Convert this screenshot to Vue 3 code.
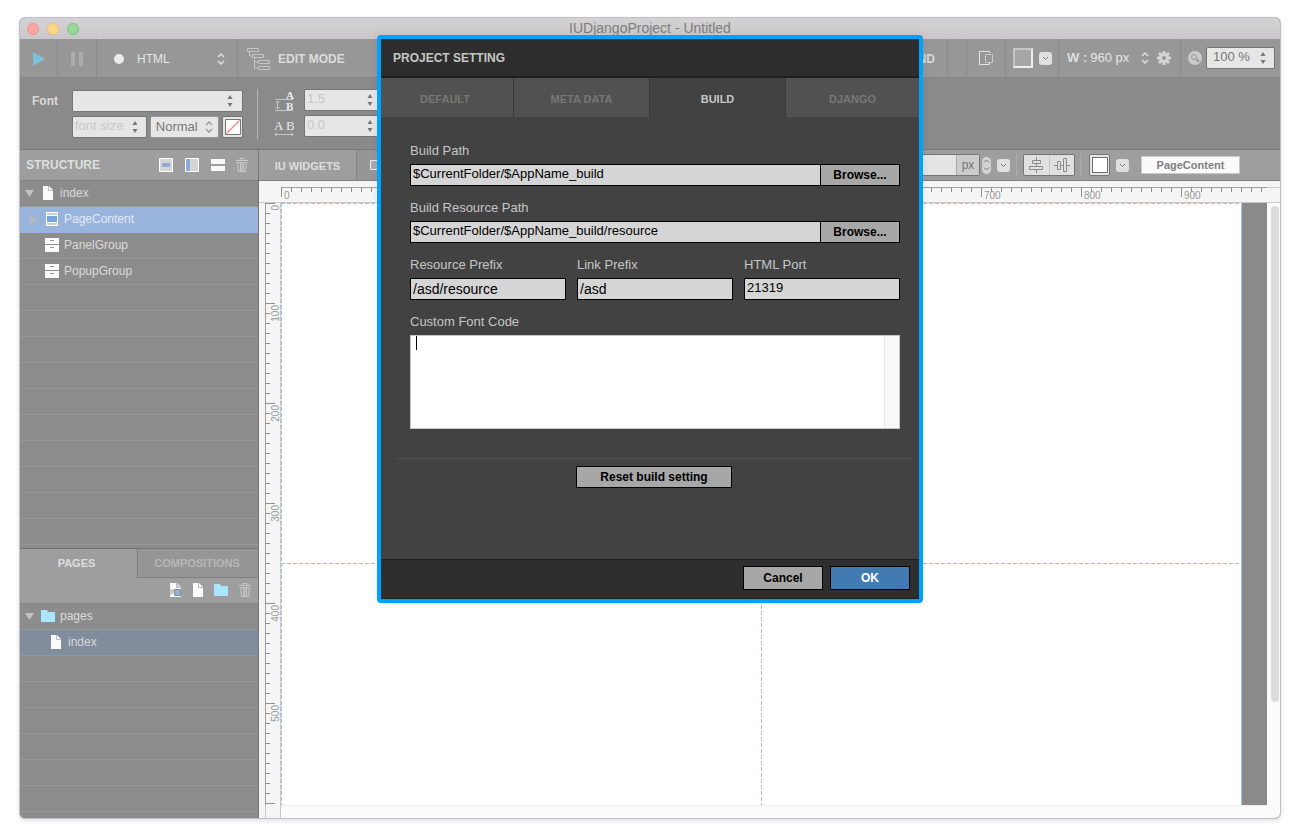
<script setup>
import { ref } from 'vue'

const mode = ref('HTML')
const weight = ref('Normal')
const fontFamily = ref('')
const fontSize = ref('')
const lineHeight = ref('')
const letterSpacing = ref('')
const zoomLevel = ref('100 %')
const size = ref('')
const buildPath = ref('$CurrentFolder/$AppName_build')
const resourcePath = ref('$CurrentFolder/$AppName_build/resource')
const resourcePrefix = ref('/asd/resource')
const linkPrefix = ref('/asd')
const port = ref('21319')
const fontCode = ref('')
const tab = ref('BUILD')
const tabs = ['DEFAULT', 'META DATA', 'BUILD', 'DJANGO']

const ticksX = Array.from({ length: 99 }, (_, i) => i * 10)
const ticksY = Array.from({ length: 61 }, (_, i) => i * 10)
const labelsX = ticksX.filter((t) => t % 100 === 0)
const labelsY = ticksY.filter((t) => t % 100 === 0 && t < 600)
const teeth = [0, 45, 90, 135, 180, 225, 270, 315]
</script>

<template>
  <div class="page">
    <div class="window">
      <header class="titlebar">
        <div class="lights">
          <button class="light red" aria-label="Close"></button>
          <button class="light yellow" aria-label="Minimize"></button>
          <button class="light green" aria-label="Zoom"></button>
        </div>
        <h1>IUDjangoProject - Untitled</h1>
      </header>

      <div class="toolbar">
        <button class="cell play" aria-label="Run">
          <svg width="12" height="14"><path d="M0 0L12 7L0 14Z" fill="#7cc0dc" /></svg>
        </button>
        <button class="cell pause" aria-label="Pause">
          <svg width="12" height="14"><path d="M0 0h4v14h-4zM8 0h4v14h-4z" fill="#acacac" /></svg>
        </button>
        <label class="cell mode">
          <span class="dot"></span>
          <select v-model="mode" aria-label="Output mode"><option>HTML</option></select>
          <svg width="8" height="12" class="chev"><path d="M1 4L4 1L7 4M1 8L4 11L7 8" /></svg>
        </label>
        <button class="cell edit">
          <svg width="24" height="24" fill="none" stroke="#c6c6c6">
            <path d="M.5 1.5h11v3h-11zM5.5 7.5h11v3h-11zM11.5 13.5h11v3h-11zM11.5 19.5h11v3h-11z" />
            <path d="M2.5 5v4h3M7.5 11v10h4M7.5 15h4" />
          </svg>
          EDIT MODE
        </button>
        <span class="grow"></span>
        <button class="cell mode-end">ND</button>
        <span class="cell blank"></span>
        <button class="cell bounds" aria-label="Show bounds">
          <svg width="15" height="15" fill="none" stroke="#e2e2e2">
            <path d="M10.5 2V.5H.5v13h10V12" />
            <path d="M6.5 3.5h7v8h-7z" stroke-dasharray="2 1" />
          </svg>
        </button>
        <div class="cell fill">
          <button class="color-box" aria-label="Background colour"></button>
          <button class="drop" aria-label="Background options">
            <svg width="7" height="5"><path d="M1 1L3.5 3.5L6 1" /></svg>
          </button>
        </div>
        <div class="cell width">
          <b>W :</b><span>960 px</span>
          <button class="bare" aria-label="Change width">
            <svg width="8" height="12" class="chev"><path d="M1 4L4 1L7 4M1 8L4 11L7 8" /></svg>
          </button>
          <button class="bare" aria-label="Canvas settings">
            <svg width="14" height="14" viewBox="-7 -7 14 14">
              <g fill="#d4d4d4">
                <rect v-for="a in teeth" :key="a" x="-1.5" y="-7" width="3" height="4" :transform="`rotate(${a})`" />
              </g>
              <circle r="3.5" fill="none" stroke="#d4d4d4" stroke-width="3" />
            </svg>
          </button>
        </div>
        <div class="cell zoom">
          <svg width="14" height="14">
            <circle cx="7" cy="7" r="7" fill="#cbcbcb" />
            <circle cx="6" cy="6" r="2.5" fill="none" stroke="#999" />
            <path d="M8 8L11 11" stroke="#999" stroke-width="2" />
          </svg>
          <label class="combo zoom-input">
            <input v-model="zoomLevel" aria-label="Zoom level" />
            <svg width="6" height="12" class="tri"><path d="M3 0L5.5 4H.5ZM.5 8H5.5L3 12Z" /></svg>
          </label>
        </div>
      </div>

      <div class="fontbar">
        <label class="font-title" for="font-family">Font</label>
        <div class="font-fields">
          <div class="combo">
            <input id="font-family" v-model="fontFamily" />
            <svg width="6" height="12" class="tri"><path d="M3 0L5.5 4H.5ZM.5 8H5.5L3 12Z" /></svg>
          </div>
          <div class="font-row">
            <div class="combo size">
              <input v-model="fontSize" placeholder="font size" aria-label="Font size" />
              <svg width="6" height="12" class="tri"><path d="M3 0L5.5 4H.5ZM.5 8H5.5L3 12Z" /></svg>
            </div>
            <div class="combo weight">
              <select v-model="weight" aria-label="Font weight"><option>Normal</option></select>
              <svg width="8" height="12" class="chev dark"><path d="M1 4L4 1L7 4M1 8L4 11L7 8" /></svg>
            </div>
            <button class="swatch" aria-label="Font colour">
              <svg width="16" height="16">
                <path d="M.5 .5h15v15h-15z" fill="#fff" stroke="#777" />
                <path d="M1.5 14.5L14.5 1.5" stroke="#ff8a80" stroke-width="1.5" />
              </svg>
            </button>
          </div>
        </div>
        <span class="rule"></span>
        <div class="spacing">
          <label class="space-row">
            <svg width="20" height="20">
              <g fill="none" stroke="#c6c6c6">
                <path d="M1 8.5h18M1 19.5h18M3.5 10v8M1.500 12L3.5 10L5.5 12M1.5 16L3.5 18L5.5 16" />
              </g>
              <text x="12" y="8" class="serif small">A</text>
              <text x="12" y="19" class="serif small">B</text>
            </svg>
            <span class="combo">
              <input v-model="lineHeight" placeholder="1.5" aria-label="Line height" />
              <svg width="6" height="12" class="tri"><path d="M3 0L5.5 4H.5ZM.5 8H5.5L3 12Z" /></svg>
            </span>
          </label>
          <label class="space-row">
            <svg width="20" height="20">
              <text x="0" y="13" class="serif plain">A</text>
              <text x="12" y="13" class="serif plain">B</text>
              <path d="M1 17.5h18M3 15.5L1 17.5L3 19.5M17 15.5L19 17.5L17 19.5" fill="none" stroke="#c6c6c6" />
            </svg>
            <span class="combo">
              <input v-model="letterSpacing" placeholder="0.0" aria-label="Letter spacing" />
              <svg width="6" height="12" class="tri"><path d="M3 0L5.5 4H.5ZM.5 8H5.5L3 12Z" /></svg>
            </span>
          </label>
        </div>
      </div>

      <div class="workspace">
        <aside class="sidebar">
          <div class="panel-head">
            <h2>STRUCTURE</h2>
            <button class="bare" aria-label="Center layout">
              <svg width="14" height="14"><path d="M.5 .5h13v13h-13z" fill="#d5d5d5" stroke="#fff" /><path d="M3 5h8v4H3z" fill="#8facd8" /></svg>
            </button>
            <button class="bare" aria-label="Left layout">
              <svg width="14" height="14"><path d="M.5 .5h13v13h-13z" fill="#d5d5d5" stroke="#fff" /><path d="M1 1h4v12H1z" fill="#8facd8" /></svg>
            </button>
            <button class="bare" aria-label="Stacked layout">
              <svg width="14" height="14"><path d="M0 1h14v5H0zM0 8h14v5H0z" fill="#fafafa" /></svg>
            </button>
            <button class="bare trash" aria-label="Delete item">
              <svg width="12" height="14" fill="none" stroke="#c8c8c8">
                <path d="M0 2.5h12M4 2V.5h4V2M1.5 4.500h9L9.500 13.5h-7zM4.5 5v8M6 5v8M7.5 5v8" />
              </svg>
            </button>
          </div>
          <ul class="tree structure">
            <li class="top">
              <svg width="9" height="7"><path d="M0 0h9L4.5 7z" fill="#c3c3c3" /></svg>
              <svg width="10" height="14" class="doc"><path d="M0 0h6l4 4v10H0z" fill="#fafafa" /><path d="M5.5 0v4.5H10" fill="none" stroke="#bbb" /></svg>
              index
            </li>
            <li class="nested selected">
              <svg width="7" height="9" class="arrow"><path d="M0 0L7 4.5L0 9z" fill="#b9b9b9" /></svg>
              <svg width="12" height="14"><path d="M0 0h12v14H0z" fill="#fff" /><path d="M1 1h10v2H1zM1 11h10v2H1z" fill="#cfcfcf" /><path d="M1 4h10v6H1z" fill="#75a7e0" /></svg>
              PageContent
            </li>
            <li v-for="group in ['PanelGroup', 'PopupGroup']" :key="group" class="nested">
              <svg width="14" height="14" class="drawer"><path d="M0 0h14v6H0zM0 7h14v7H0z" fill="#fafafa" /><path d="M5 2.5h4M5 9.5h4" stroke="#999" /></svg>
              {{ group }}
            </li>
          </ul>
          <div class="lower-head">
            <div class="page-tabs">
              <button class="on">PAGES</button>
              <button>COMPOSITIONS</button>
            </div>
            <div class="page-tools">
              <button class="bare" aria-label="Add page from layout">
                <svg width="12" height="14"><path d="M0 0h7l4 4v10H0z" fill="#fafafa" /><path d="M6.500 0v4.500H11M0 7h5l-3 4H0" fill="#ccc" stroke="#bbb" /><path d="M4.500 6.500h6v6h-6z" fill="#8fb4e4" stroke="#888" /></svg>
              </button>
              <button class="bare" aria-label="Add page">
                <svg width="10" height="14"><path d="M0 0h6l4 4v10H0z" fill="#fafafa" /><path d="M5.5 0v4.5H10" fill="none" stroke="#bbb" /></svg>
              </button>
              <button class="bare" aria-label="Add folder">
                <svg width="14" height="12"><path d="M0 0h6l1 2h7v10H0z" fill="#a9e5fd" /></svg>
              </button>
              <button class="bare" aria-label="Delete page">
                <svg width="12" height="14" fill="none" stroke="#c8c8c8">
                  <path d="M0 2.5h12M4 2V.5h4V2M1.5 4.5h9L9.5 13.5h-7zM4.5 5v8M6 5v8M7.5 5v8" />
                </svg>
              </button>
            </div>
          </div>
          <ul class="tree pages">
            <li class="top">
              <svg width="9" height="7"><path d="M0 0h9L4.5 7z" fill="#c3c3c3" /></svg>
              <svg width="14" height="12" class="folder"><path d="M0 0h6l1 2h7v10H0z" fill="#a9e5fd" /></svg>
              pages
            </li>
            <li class="page-item">
              <svg width="10" height="14"><path d="M0 0h6l4 4v10H0z" fill="#fafafa" /><path d="M5.5 0v4.5H10" fill="none" stroke="#bbb" /></svg>
              index
            </li>
          </ul>
        </aside>

        <main class="editor">
          <div class="propbar">
            <button class="widgets">IU WIDGETS</button>
            <button class="widget-icon" aria-label="Box widget">
              <svg width="14" height="10"><path d="M.5 .5h13v9H.5z" fill="#aaa" stroke="#eee" /></svg>
            </button>
            <span class="grow"></span>
            <label class="unit-field"><input v-model="size" aria-label="Size" /><span>px</span></label>
            <button class="step" aria-label="Adjust size">
              <svg width="7" height="12" class="mini"><path d="M1 3.5L3.5 1L6 3.5M1 8.5L3.5 11L6 8.5" /></svg>
            </button>
            <button class="drop" aria-label="Size options">
              <svg width="7" height="5"><path d="M1 1L3.5 3.5L6 1" /></svg>
            </button>
            <span class="sep"></span>
            <div class="aligns">
              <button aria-label="Align centre">
                <svg width="14" height="16"><path d="M7.5 0v3M7.5 6v3M7.5 13v3M3.5 3.5h8v3h-8zM.5 9.5h13v3H.5z" /></svg>
              </button>
              <button aria-label="Align middle">
                <svg width="16" height="14"><path d="M0 7.5h3M6 7.5h4M13 7.5h3M3.5 3.5h3v8h-3zM9.5 .5h3v13h-3z" /></svg>
              </button>
            </div>
            <span class="sep"></span>
            <button class="swatch fill-swatch" aria-label="Fill colour"><i></i></button>
            <button class="drop" aria-label="Fill options">
              <svg width="7" height="5"><path d="M1 1L3.5 3.5L6 1" /></svg>
            </button>
            <button class="target">PageContent</button>
          </div>

          <div class="ruler-x">
            <svg width="100%" height="21">
              <path d="M22 6.5H2000" stroke="#cacaca" />
              <path d="M22 6.5H1008" stroke="#a0a0a0" />
              <path v-for="t in ticksX" :key="t" :d="`M${t + 22.5} 6V${t % 100 ? 11 : 16}`" stroke="#8f8f8f" />
              <text v-for="t in labelsX" :key="t" :x="t + 25" y="18">{{ t }}</text>
            </svg>
          </div>
          <div class="stage">
            <div class="ruler-y">
              <svg width="21" height="100%">
                <path d="M6.5 0V2000" stroke="#cacaca" />
                <path d="M6.5 0V602" stroke="#a0a0a0" />
                <path v-for="t in ticksY" :key="t" :d="`M6 ${t + 0.5}H${t % 100 ? 11 : 16}`" stroke="#8f8f8f" />
                <text
                  v-for="t in labelsY" :key="t" text-anchor="end"
                  :transform="`translate(20 ${t + 2}) rotate(-90)`"
                >{{ t }}</text>
              </svg>
            </div>
            <div class="scroll-area">
              <div class="view">
                <div class="canvas">
                  <span class="guide-h"></span>
                  <span class="guide-v"></span>
                </div>
                <div class="outside"></div>
              </div>
            </div>
            <div class="scrollbar"><span></span></div>
          </div>
        </main>
      </div>
    </div>

    <section class="dialog" role="dialog" aria-labelledby="dialog-title">
      <h2 id="dialog-title">PROJECT SETTING</h2>
      <div class="tabs" role="tablist">
        <button
          v-for="t in tabs" :key="t" role="tab" :class="{ active: t === tab }"
          :aria-selected="t === tab" @click="tab = t"
        >{{ t }}</button>
      </div>
      <form class="settings" @submit.prevent>
        <div class="field">
          <label for="build-path">Build Path</label>
          <div class="path"><input id="build-path" v-model="buildPath" /><button type="button">Browse...</button></div>
        </div>
        <div class="field">
          <label for="resource-path">Build Resource Path</label>
          <div class="path"><input id="resource-path" v-model="resourcePath" /><button type="button">Browse...</button></div>
        </div>
        <div class="three">
          <div class="field large">
            <label for="resource-prefix">Resource Prefix</label>
            <input id="resource-prefix" v-model="resourcePrefix" />
          </div>
          <div class="field large">
            <label for="link-prefix">Link Prefix</label>
            <input id="link-prefix" v-model="linkPrefix" />
          </div>
          <div class="field">
            <label for="port">HTML Port</label>
            <input id="port" v-model="port" />
          </div>
        </div>
        <div class="field">
          <label for="font-code">Custom Font Code</label>
          <div class="code">
            <textarea id="font-code" v-model="fontCode"></textarea>
            <span class="track"></span>
            <span class="caret"></span>
          </div>
        </div>
      </form>
      <div class="reset"><button>Reset build setting</button></div>
      <footer>
        <button>Cancel</button>
        <button class="ok">OK</button>
      </footer>
    </section>
  </div>
</template>

<style>
body {
  background: #fff;
}
</style>

<style scoped>
* {
  box-sizing: border-box;
}
.page {
  position: relative;
  display: flex;
  min-height: 100vh;
  padding: 17px 19px 21px;
  font: 12px/16px "Liberation Sans", Arial, sans-serif;
}
h1, h2, ul {
  margin: 0;
  padding: 0;
}
button, input, select, textarea {
  margin: 0;
  padding: 0;
  border: 0;
  border-radius: 0;
  font: inherit;
  color: inherit;
  outline: none;
}
button {
  background: none;
}
select {
  appearance: none;
  background: none;
}
svg {
  display: block;
  flex: none;
}
.window {
  flex: 1;
  min-width: 0;
  display: flex;
  flex-direction: column;
  overflow: hidden;
  border: 1px solid #c0c0c6;
  border-radius: 6px;
  background: #8c8c8c;
  box-shadow: 0 2px 5px rgba(0, 0, 0, 0.12);
}
.titlebar {
  position: relative;
  display: flex;
  align-items: center;
  justify-content: center;
  height: 21px;
  background: linear-gradient(#d4d2d4, #c9c7c9);
}
.titlebar h1 {
  padding-bottom: 1px;
  font-size: 14px;
  line-height: 16px;
  font-weight: 400;
  color: #7e7c7e;
}
.lights {
  position: absolute;
  left: 7px;
  display: flex;
  gap: 8px;
}
.light {
  width: 12px;
  height: 12px;
  border: 1px solid;
  border-radius: 50%;
}
.red { background: #f9a5a1; border-color: #e8928f; }
.yellow { background: #fdd789; border-color: #ecbb72; }
.green { background: #97d897; border-color: #78c084; }

.toolbar {
  display: flex;
  height: 39px;
  background: #979797;
  border-bottom: 1px solid #868686;
  color: #e6e6e6;
}
.cell {
  display: flex;
  align-items: center;
  padding-top: 2px;
  border-right: 1px solid #8a8a8a;
}
.grow {
  flex: 1;
}
.play { width: 38px; padding-left: 13px; }
.pause { width: 39px; padding-left: 13px; }
.mode { width: 141px; padding: 2px 12px 0 17px; }
.mode select { flex: 1; margin-left: 13px; }
.dot {
  width: 10px;
  height: 10px;
  border-radius: 50%;
  background: #ececec;
}
.chev { fill: none; stroke: #dedede; stroke-width: 1.5; }
.chev.dark { stroke: #999; }
.tri { fill: #777; }
.edit {
  padding-left: 9px;
  gap: 7px;
  border: 0;
  font-weight: 700;
  color: #dcdcdc;
}
.mode-end {
  padding-right: 12px;
  font-weight: 700;
  color: #d6d6d6;
}
.blank { width: 19px; }
.bounds { width: 39px; padding-top: 0; padding-left: 12px; }
.fill { width: 53px; padding-top: 0; padding-left: 7px; gap: 6px; }
.color-box {
  width: 20px;
  height: 20px;
  border: solid;
  border-width: 2px;
  border-color: #c6c6c6 #eee #eee #c6c6c6;
  background: #a6a6a6;
}
.drop {
  display: flex;
  align-items: center;
  justify-content: center;
  width: 13px;
  height: 13px;
  border-radius: 3px;
  background: #e0e0e0;
}
.drop svg { fill: none; stroke: #777; }
.width { width: 122px; padding-top: 0; padding-left: 8px; font-size: 13px; }
.width b { margin-right: 3px; color: #dedede; }
.width span { flex: 1; white-space: nowrap; }
.width .bare { margin-right: 8px; }
.width .bare:last-child { margin-right: 9px; }
.zoom { padding: 0 5px 0 7px; gap: 4px; border: 0; }
.combo {
  display: flex;
  align-items: center;
  height: 22px;
  padding-right: 9px;
  border: 1px solid #757575;
  border-radius: 2px;
  background: #e6e6e6;
  font-size: 13px;
  color: #777;
}
.combo input, .combo select {
  flex: 1;
  width: 0;
  min-width: 0;
  height: 17px;
  padding-left: 2px;
  background: none;
  align-self: flex-start;
}
.combo select { height: 20px; }
.combo input::placeholder { color: #c6c6c6; opacity: 1; }
.combo.zoom-input { width: 69px; padding-right: 8px; }
.combo.zoom-input input { padding-left: 6px; }

.fontbar {
  display: flex;
  height: 72px;
  padding: 11px 12px;
  background: #8a8a8a;
  border-bottom: 1px solid #787878;
}
.font-title {
  width: 40px;
  padding-top: 4px;
  font-weight: 700;
  color: #dadada;
}
.font-fields {
  display: flex;
  flex-direction: column;
  gap: 4px;
  width: 171px;
  padding-top: 1px;
}
.font-row {
  display: flex;
  gap: 3px;
}
.size { flex: 74; padding-right: 8px; }
.weight { flex: 71; padding-right: 5px; border-color: #999; }
.combo.weight select { padding-left: 5px; }
.swatch {
  display: flex;
  align-items: center;
  justify-content: center;
  width: 21px;
  height: 22px;
  border: 1px solid #757575;
  border-radius: 2px;
  background: #e6e6e6;
}
.rule {
  width: 1px;
  height: 50px;
  margin: 0 16px 0 14px;
  background: #b4b4b4;
}
.spacing {
  display: flex;
  flex-direction: column;
  gap: 4px;
}
.space-row {
  display: flex;
  align-items: center;
  gap: 10px;
}
.space-row svg:first-child { align-self: flex-end; }
.space-row .combo { width: 76px; padding-right: 6px; }
.serif {
  font: 700 13px "Liberation Serif", serif;
  fill: #ececec;
}
.serif.small { font-size: 11px; }
.serif.plain { font-weight: 400; }

.workspace {
  flex: 1;
  display: flex;
  min-height: 0;
}
.sidebar {
  display: flex;
  flex-direction: column;
  width: 239px;
  border-right: 1px solid #767676;
}
.panel-head {
  display: flex;
  align-items: center;
  gap: 12px;
  height: 31px;
  padding: 0 10px 0 6px;
  background: #9e9e9e;
  border-bottom: 1px solid #838383;
}
.panel-head h2 {
  flex: 1;
  font-size: 12px;
  color: #dedede;
}
.trash { margin-left: -1px; }
.tree {
  list-style: none;
  overflow: hidden;
  color: #dadada;
  background: repeating-linear-gradient(#8c8c8c 0 25px, #979797 25px 26px);
}
.structure { flex: 367 0 0; }
.pages { flex: 214 0 0; }
.tree li {
  display: flex;
  align-items: center;
  gap: 6px;
  height: 26px;
  padding: 0 0 2px 25px;
}
.tree .top { padding-left: 5px; }
.tree .doc { margin-left: 3px; margin-right: 1px; }
.tree .top .folder { margin-left: 1px; margin-right: -1px; }
.tree .arrow { margin: 0 3px 0 -15px; }
.tree .nested.selected {
  background: #98b4dd;
  color: #e2eaf6;
}
.tree .drawer { margin-right: -1px; }
.tree .page-item {
  padding: 0 0 1px 31px;
  gap: 7px;
  background: #818c9c;
  border-bottom: 1px solid #8b98a8;
}
.lower-head {
  height: 56px;
  background: #9e9e9e;
  border-top: 1px solid #757575;
  border-bottom: 1px solid #868686;
}
.page-tabs {
  display: grid;
  grid-template-columns: 117fr 121fr;
  height: 29px;
  font-size: 11px;
  color: #b6b6b6;
}
.page-tabs button {
  padding: 0 2px 1px 0;
  font-weight: 700;
  background: #969696;
  border-left: 1px solid #7f7f7f;
  border-bottom: 1px solid #7f7f7f;
}
.page-tabs .on {
  padding: 0 4px 2px 0;
  background: none;
  border: 0;
  color: #dedede;
}
.page-tools {
  display: flex;
  align-items: center;
  justify-content: flex-end;
  gap: 11px;
  height: 23px;
  padding-right: 7px;
}

.editor {
  flex: 1;
  min-width: 0;
  display: flex;
  flex-direction: column;
}
.propbar {
  display: flex;
  align-items: center;
  height: 31px;
  padding-right: 40px;
  background: #9e9e9e;
  border-bottom: 1px solid #7f7f7f;
}
.widgets {
  align-self: stretch;
  width: 98px;
  padding-top: 2px;
  border-right: 1px solid #868686;
  font-size: 11px;
  font-weight: 700;
  color: #dedede;
}
.widget-icon {
  align-self: stretch;
  padding: 0 13px;
  background: #969696;
}
.unit-field {
  display: flex;
  width: 100px;
  height: 22px;
  border: 1px solid #757575;
  border-radius: 2px;
  background: #e4e4e4;
  color: #777;
}
.unit-field input { flex: 1; width: 0; background: none; }
.unit-field span {
  width: 23px;
  padding-top: 2px;
  border-left: 1px solid #aaa;
  background: #ccc;
  text-align: center;
}
.step {
  display: flex;
  align-items: center;
  justify-content: center;
  width: 9px;
  height: 17px;
  margin: 0 6px 0 2px;
  border-radius: 5px;
  background: #d2d2d2;
}
.mini { fill: none; stroke: #777; }
.sep {
  width: 1px;
  height: 24px;
  margin: 0 6px;
  background: #ababab;
}
.sep + .swatch { margin: 0 6px 0 1px; }
.aligns {
  display: flex;
  width: 52px;
  height: 22px;
  border: 1px solid #757575;
  border-radius: 2px;
  background: #e0e0e0;
}
.aligns + .sep { margin: 0 7px 0 5px; }
.aligns button {
  flex: 1;
  display: flex;
  align-items: center;
  justify-content: center;
}
.aligns button + button { border-left: 1px solid #c8c8c8; }
.aligns svg { fill: none; stroke: #8a8a8a; }
.fill-swatch i {
  width: 16px;
  height: 16px;
  border: 1px solid #6e6e6e;
  background: #fff;
}
.target {
  width: 99px;
  height: 18px;
  margin-left: 12px;
  border: 1px solid #c8c8c8;
  background: #fafafa;
  font-size: 11px;
  line-height: 14px;
  font-weight: 700;
  color: #808080;
}
.ruler-x {
  height: 22px;
  background: #f5f5f5;
  border-bottom: 1px solid #c9c9c9;
  overflow: hidden;
}
.ruler-x text, .ruler-y text {
  font-size: 10px;
  fill: #999;
}
.stage {
  flex: 1;
  display: flex;
  min-height: 0;
}
.ruler-y {
  width: 22px;
  background: #f5f5f5;
  border-right: 1px solid #c9c9c9;
  overflow: hidden;
}
.scroll-area {
  flex: 1;
  display: flex;
  padding-bottom: 12px;
  background: #fbfbfb;
}
.view {
  flex: 1;
  display: flex;
  border-bottom: 1px solid #eee;
}
.canvas {
  position: relative;
  flex: 1;
  border-right: 1px solid #9cc3ee;
  background:
    repeating-linear-gradient(90deg, #9cbfe8 0 4px, #fff 4px 6px) top / 100% 1px no-repeat,
    repeating-linear-gradient(#9cbfe8 0 4px, #fff 4px 6px) left / 1px 100% no-repeat,
    #fff;
}
.guide-h {
  position: absolute;
  top: 360px;
  left: 0;
  right: 0;
  height: 1px;
  background: repeating-linear-gradient(90deg, #9cbfe8 0 4px, #fff 4px 6px);
}
.guide-v {
  position: absolute;
  left: 50%;
  top: 0;
  bottom: 0;
  width: 1px;
  background: repeating-linear-gradient(#9cbfe8 0 4px, #fff 4px 6px);
}
.outside {
  width: 25px;
  background: #8a8a8a;
}
.scrollbar {
  width: 13px;
  padding: 3px 1px 0 4px;
  background: #fbfbfb;
}
.scrollbar span {
  display: block;
  height: 81%;
  border-radius: 4px;
  background: #dcdcdc;
}

.dialog {
  position: absolute;
  top: 35px;
  left: 50%;
  width: 546px;
  margin-left: -273px;
  border: 4px solid #00a2ff;
  border-radius: 4px;
  background: #424242;
  box-shadow: 0 0 8px rgba(0, 0, 0, 0.06);
  color: #c6c6c6;
}
.dialog h2 {
  height: 39px;
  padding: 11px 12px;
  background: #2e2e2e;
  border-bottom: 2px solid #1f1f1f;
  font-size: 12px;
}
.tabs {
  display: grid;
  grid-template-columns: 133fr 136fr 136fr 133fr;
  height: 39px;
}
.tabs button {
  padding-top: 2px;
  background: #515151;
  border-right: 1px solid #393939;
  font-size: 11px;
  font-weight: 700;
  color: #777;
}
.tabs button:first-child { padding-right: 4px; }
.tabs button:last-child { border: 0; }
.tabs .active {
  background: #424242;
  color: #c6c6c6;
}
.settings {
  display: flex;
  flex-direction: column;
  gap: 13px;
  padding: 25px 19px 30px 29px;
  font-size: 13px;
}
.field {
  display: flex;
  flex-direction: column;
  gap: 4px;
}
.field label { line-height: 18px; }
.field input {
  height: 22px;
  padding: 0 2px 3px;
  border: 1px solid #000;
  background: #d5d5d5;
  color: #000;
}
.field.large input {
  padding-bottom: 1px;
  font-size: 14px;
}
.path { display: flex; }
.path input { flex: 1; min-width: 0; }
.path button, .reset button, footer button {
  border: 1px solid #000;
  background: #a7a7a7;
  font-size: 12px;
  font-weight: 700;
  color: #000;
}
.path button {
  width: 79px;
  height: 22px;
  border-left: 0;
}
.three {
  display: grid;
  grid-template-columns: repeat(3, 156px);
  justify-content: space-between;
}
.three input { width: 100%; }
.code {
  position: relative;
  display: flex;
  height: 94px;
  border: 1px solid #c6c6c6;
  background: #fff;
}
.code textarea {
  flex: 1;
  padding: 0 5px;
  resize: none;
  background: none;
  color: #000;
}
.track {
  width: 15px;
  border-left: 1px solid #e6e6e6;
  background: #f9f9f9;
}
.caret {
  position: absolute;
  left: 5px;
  top: 0;
  width: 1px;
  height: 14px;
  background: #000;
}
.reset {
  height: 101px;
  margin: -1px 7px 0 16px;
  padding: 7px 0 0 3px;
  border-top: 1px solid #515151;
}
.reset button {
  display: block;
  width: 156px;
  height: 22px;
  margin-left: 176px;
}
footer {
  display: flex;
  justify-content: flex-end;
  gap: 7px;
  height: 40px;
  padding: 6px 9px;
  background: #2e2e2e;
  border: 1px solid #202020;
  border-width: 1px 0;
}
footer button {
  width: 80px;
  height: 24px;
}
footer .ok {
  background: #427ab2;
  color: #fff;
}
</style>
